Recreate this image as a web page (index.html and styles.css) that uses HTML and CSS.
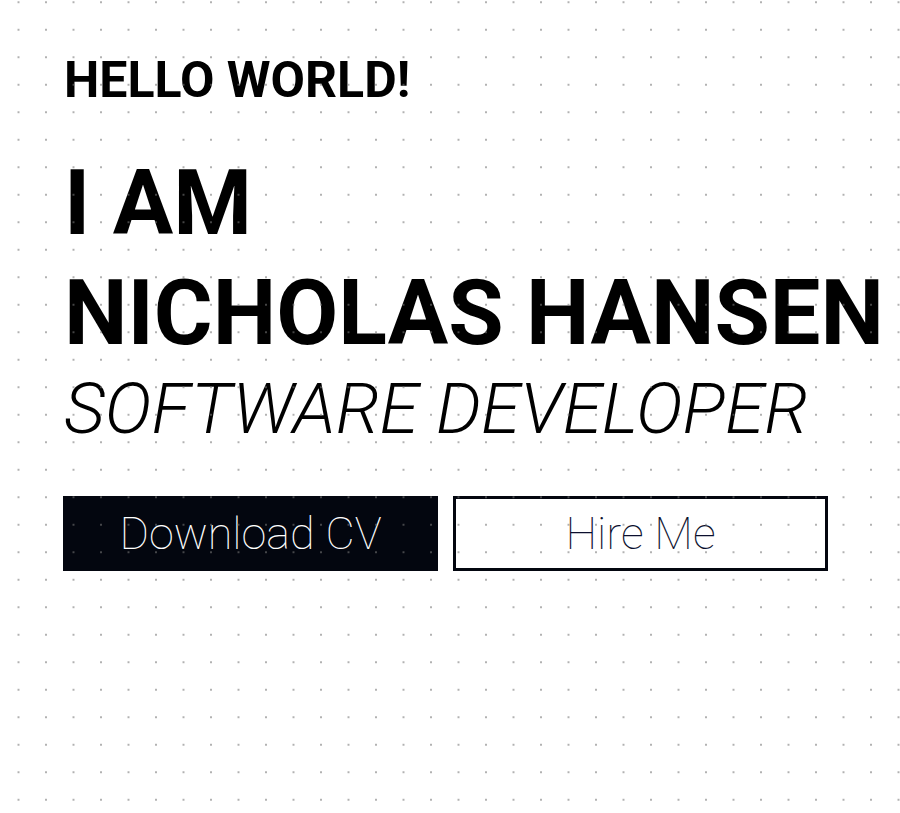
FILE: index.html
```html
<!DOCTYPE html>
<html lang="en">
<head>
<meta charset="utf-8">
<title>Nicholas Hansen</title>
<link rel="stylesheet" href="styles.css">
</head>
<body>
<main class="hero">
  <h2 class="hello">HELLO WORLD!</h2>
  <h1 class="name">I AM<br>NICHOLAS HANSEN</h1>
  <p class="role">SOFTWARE DEVELOPER</p>
  <div class="actions">
    <a class="btn btn-dark" href="#">Download CV</a>
    <a class="btn btn-outline" href="#">Hire Me</a>
  </div>
</main>
</body>
</html>
```
FILE: styles.css
```css
html, body {
  margin: 0;
  padding: 0;
  background: #ffffff;
}
body {
  font-family: Roboto, "Liberation Sans", sans-serif;
  color: #000;
  min-height: 813px;
}
body::after {
  content: "";
  position: fixed;
  inset: 0;
  pointer-events: none;
  background-image: radial-gradient(circle, rgba(120,120,120,0.75) 0.6px, transparent 1px);
  background-size: 27.5px 27.5px;
  background-position: 4.75px -11.5px;
}
.hero {
  padding: 50px 0 0 64px;
  display: flex;
  flex-direction: column;
  align-items: flex-start;
}
.hello {
  margin: 0;
  font-size: 50px;
  line-height: 60px;
  font-weight: 700;
}
.name {
  margin: 39px 0 0 0;
  font-size: 90px;
  line-height: 110px;
  font-weight: 700;
  white-space: nowrap;
}
.role {
  margin: -2px 0 0 0;
  font-size: 71px;
  line-height: 84px;
  font-style: italic;
  font-weight: 300;
  white-space: nowrap;
}
.actions {
  margin-top: 45px;
  margin-left: -1px;
  display: flex;
  gap: 15px;
}
.btn {
  box-sizing: border-box;
  width: 375px;
  height: 75px;
  display: flex;
  align-items: center;
  justify-content: center;
  font-size: 45px;
  font-weight: 100;
  text-decoration: none;
}
.btn-dark {
  background: #03060f;
  color: #ffffff;
}
.btn-outline {
  background: #ffffff;
  border: 3px solid #03060f;
  color: #0b0f2e;
}
```
